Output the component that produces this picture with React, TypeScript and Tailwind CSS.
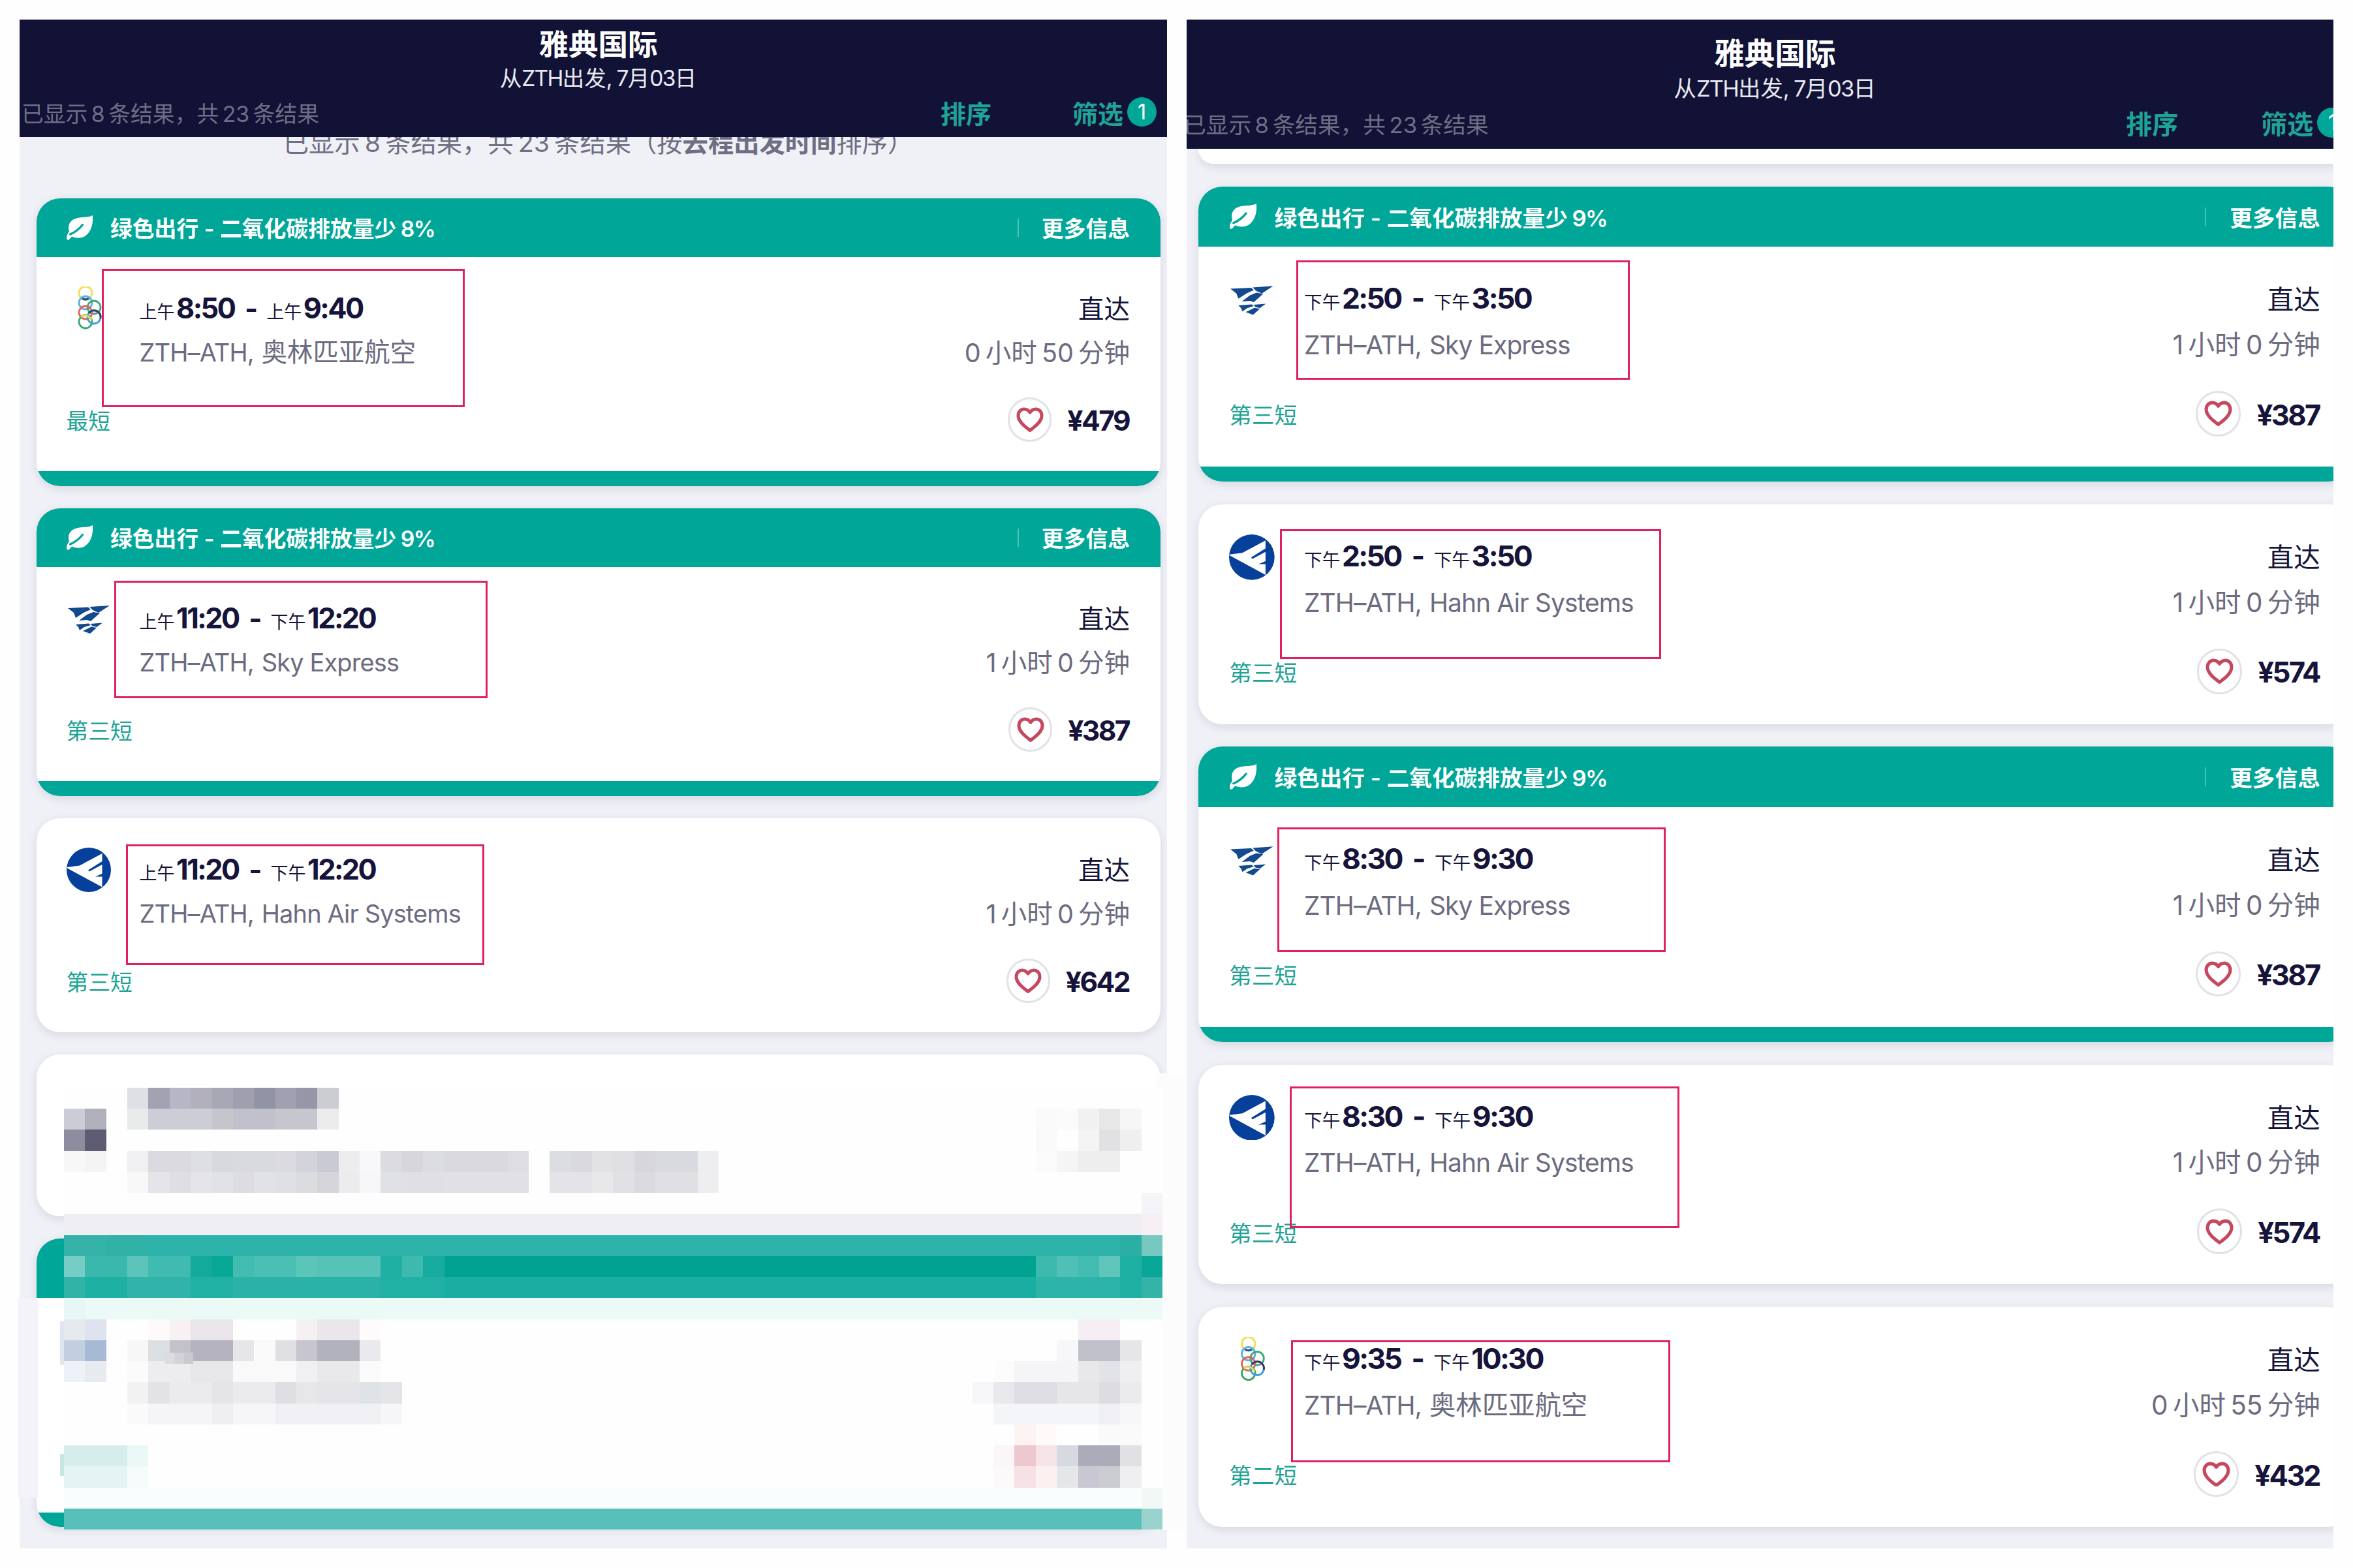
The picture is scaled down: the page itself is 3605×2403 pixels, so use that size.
import React from "react";

type Logo = "olympic" | "sky" | "hahn";

interface Flight {
  green?: string;
  logo: Logo;
  from: [string, string];
  to: [string, string];
  carrier: string;
  duration: string;
  tag: string;
  price: string;
}

interface Box {
  x: number;
  y: number;
  w: number;
  h: number;
}

const leftFlights: Flight[] = [
  { green: "8%", logo: "olympic", from: ["上午", "8:50"], to: ["上午", "9:40"], carrier: "奥林匹亚航空", duration: "0 小时 50 分钟", tag: "最短", price: "¥479" },
  { green: "9%", logo: "sky", from: ["上午", "11:20"], to: ["下午", "12:20"], carrier: "Sky Express", duration: "1 小时 0 分钟", tag: "第三短", price: "¥387" },
  { logo: "hahn", from: ["上午", "11:20"], to: ["下午", "12:20"], carrier: "Hahn Air Systems", duration: "1 小时 0 分钟", tag: "第三短", price: "¥642" },
];

const rightFlights: Flight[] = [
  { green: "9%", logo: "sky", from: ["下午", "2:50"], to: ["下午", "3:50"], carrier: "Sky Express", duration: "1 小时 0 分钟", tag: "第三短", price: "¥387" },
  { logo: "hahn", from: ["下午", "2:50"], to: ["下午", "3:50"], carrier: "Hahn Air Systems", duration: "1 小时 0 分钟", tag: "第三短", price: "¥574" },
  { green: "9%", logo: "sky", from: ["下午", "8:30"], to: ["下午", "9:30"], carrier: "Sky Express", duration: "1 小时 0 分钟", tag: "第三短", price: "¥387" },
  { logo: "hahn", from: ["下午", "8:30"], to: ["下午", "9:30"], carrier: "Hahn Air Systems", duration: "1 小时 0 分钟", tag: "第三短", price: "¥574" },
  { logo: "olympic", from: ["下午", "9:35"], to: ["下午", "10:30"], carrier: "奥林匹亚航空", duration: "0 小时 55 分钟", tag: "第二短", price: "¥432" },
];

const boxes: Box[] = [
  { x: 156, y: 412, w: 556, h: 212 },
  { x: 175, y: 890, w: 572, h: 180 },
  { x: 193, y: 1294, w: 549, h: 185 },
  { x: 1986, y: 399, w: 511, h: 183 },
  { x: 1961, y: 811, w: 584, h: 199 },
  { x: 1957, y: 1268, w: 595, h: 191 },
  { x: 1976, y: 1665, w: 597, h: 217 },
  { x: 1978, y: 2054, w: 581, h: 187 },
];

// Mosaic rows: [first column, column span, colour]
type Run = [number, number, string];
const mosaic: Run[][] = [
  [[3, 1, "#dfdfe6"], [4, 1, "#a2a2b2"], [5, 1, "#b6b6c5"], [6, 1, "#b2b0bd"], [7, 1, "#a7a7b5"], [8, 1, "#9f9fae"], [9, 1, "#9194a4"], [10, 1, "#a0a0b0"], [11, 1, "#9796a8"], [12, 1, "#ccccd3"]],
  [[0, 1, "#ccccd6"], [1, 1, "#b0b0bd"], [3, 1, "#e9eaeb"], [4, 3, "#cccdd7"], [7, 1, "#c5c6cc"], [8, 2, "#c1c1cd"], [10, 2, "#c6c6ce"], [12, 1, "#ececee"], [46, 1, "#fafafa"], [47, 1, "#fbfbfb"], [48, 1, "#f1f1f1"], [49, 1, "#e7e7e8"], [50, 1, "#f6f6f6"]],
  [[0, 1, "#8e8c9f"], [1, 1, "#5e5c73"], [46, 1, "#f9f9f9"], [48, 1, "#f4f4f4"], [49, 1, "#e1e1e3"], [50, 1, "#efeff0"]],
  [[0, 1, "#f7f7f8"], [1, 1, "#f4f4f5"], [3, 1, "#f0f0f2"], [4, 2, "#dadae0"], [6, 1, "#dedfe3"], [7, 1, "#d8d8df"], [8, 2, "#d9dadf"], [10, 1, "#dadae0"], [11, 1, "#d3d3dc"], [12, 1, "#cacad4"], [13, 1, "#ededf0"], [14, 1, "#f8f8fb"], [15, 1, "#dbdbe1"], [16, 1, "#d6d6dc"], [17, 1, "#dcdde1"], [18, 3, "#d9d9de"], [21, 1, "#dedee2"], [23, 1, "#dcdde1"], [24, 1, "#dadade"], [25, 1, "#e2e2e5"], [26, 1, "#dfdfe4"], [27, 1, "#d6d6dc"], [28, 2, "#d9d9e0"], [30, 1, "#eeeef0"], [46, 1, "#fbfbfb"], [47, 1, "#f5f5f5"], [48, 2, "#eeeeee"]],
  [[3, 1, "#f8f8f9"], [4, 1, "#e5e5e9"], [5, 1, "#dfdfe3"], [6, 1, "#e4e4e9"], [7, 1, "#e1e2e6"], [8, 1, "#dcdce1"], [9, 1, "#e0e2e5"], [10, 1, "#dfe0e5"], [11, 1, "#dbdcde"], [12, 1, "#d4d4da"], [13, 1, "#ececef"], [14, 1, "#f7f7fa"], [15, 1, "#e0e1e5"], [16, 2, "#dfdfe4"], [18, 4, "#e0e0e5"], [23, 2, "#e3e3e8"], [25, 1, "#e8e8eb"], [26, 1, "#e0e0e5"], [27, 1, "#dadadf"], [28, 2, "#dfdfe4"], [30, 1, "#eeeef1"]],
  [[51, 1, "#f4f5f9"]],
  [[0, 51, "#efeef3"], [51, 1, "#f6f0f5"]],
  [[0, 2, "#36b3a9"], [2, 2, "#30b2a8"], [4, 46, "#2eb3aa"], [50, 1, "#2bafa5"], [51, 1, "#76c8c0"]],
  [[0, 1, "#76cdc6"], [1, 2, "#3bb8ad"], [3, 1, "#5cc4ba"], [4, 2, "#3fbbb1"], [6, 1, "#12ab9b"], [7, 1, "#07a896"], [8, 1, "#42bcb1"], [9, 2, "#4cbfb4"], [11, 1, "#5cc5ba"], [12, 3, "#57c2b8"], [15, 1, "#20b0a3"], [16, 1, "#3eb9ae"], [17, 1, "#18ac9f"], [18, 28, "#00a392"], [46, 1, "#3eb9ae"], [47, 1, "#50bfb5"], [48, 1, "#42bbb1"], [49, 1, "#60c5bb"], [50, 1, "#1fb0a4"], [51, 1, "#08a797"]],
  [[0, 1, "#32b3a8"], [1, 2, "#1fb0a4"], [3, 3, "#32b3a9"], [6, 2, "#20b1a4"], [8, 7, "#2bb2a7"], [15, 3, "#20b0a4"], [18, 28, "#1aaea2"], [46, 4, "#2cb4a9"], [50, 1, "#20b0a3"], [51, 1, "#34b3a9"]],
  [[0, 1, "#e6f7f5"], [1, 51, "#ebf9f7"]],
  [[0, 1, "#e5eaef"], [1, 1, "#dfe2ef"], [4, 1, "#fefafb"], [5, 1, "#f7f1f3"], [6, 2, "#e9e5e9"], [11, 1, "#f5f1f3"], [12, 2, "#ebe6ea"], [14, 1, "#fffbfc"], [48, 2, "#f5eef3"]],
  [[0, 1, "#c2cfe0"], [1, 1, "#a7bad5"], [3, 1, "#f7f7f8"], [4, 1, "#dcdfe2"], [5, 1, "#c3c2c9"], [6, 2, "#b4b3bf"], [8, 1, "#e6e6e9"], [9, 1, "#fafafb"], [10, 1, "#e0e0e3"], [11, 1, "#c7c6d0"], [12, 2, "#b2b1be"], [14, 1, "#eae9ed"], [47, 1, "#f7f7f9"], [48, 2, "#c1c1cb"], [50, 1, "#e6e6e9"]],
  [[0, 1, "#eef1f8"], [1, 1, "#e7ebf0"], [3, 1, "#fbfbfb"], [4, 2, "#ededef"], [6, 2, "#e7e7ea"], [8, 3, "#f9f9fa"], [11, 1, "#f0f0f2"], [12, 2, "#e9e9ec"], [14, 1, "#fbfbfc"], [44, 1, "#fcfcfd"], [45, 3, "#f5f5f7"], [48, 1, "#e8e8eb"], [49, 1, "#e2e3e7"], [50, 1, "#efeff1"]],
  [[3, 1, "#f2f2f3"], [4, 1, "#e3e3e7"], [5, 2, "#ebebed"], [7, 1, "#e4e4e9"], [8, 2, "#ebebed"], [10, 1, "#dedfe3"], [11, 1, "#e7e7ea"], [12, 2, "#e5e5e9"], [14, 1, "#dfe2e7"], [15, 1, "#e4e4e9"], [43, 1, "#f7f7fa"], [44, 1, "#e9e8ed"], [45, 2, "#dddde3"], [47, 2, "#e6e6e9"], [49, 1, "#dcdce1"], [50, 1, "#ebebed"]],
  [[3, 1, "#fafafb"], [4, 3, "#f5f5f8"], [7, 1, "#efeff3"], [8, 2, "#f6f6f8"], [10, 5, "#f0f0f4"], [15, 1, "#f6f6f8"], [44, 5, "#f4f5f8"], [49, 1, "#f0f0f4"], [50, 1, "#f7f7f9"]],
  [[45, 1, "#fdf3f2"], [46, 1, "#fefafa"], [49, 2, "#fafafb"]],
  [[0, 3, "#d5eeeb"], [3, 1, "#eaf8f7"], [44, 1, "#fbf6f8"], [45, 1, "#eec8cf"], [46, 1, "#f7e4e8"], [47, 1, "#d6d9e2"], [48, 2, "#acabb9"], [50, 1, "#e0e0e5"]],
  [[0, 3, "#e4f4f2"], [3, 1, "#f4fbfa"], [44, 1, "#fdf9fa"], [45, 1, "#f5e1e6"], [46, 1, "#fdf0f1"], [47, 1, "#e4e6ea"], [48, 1, "#c8c7d2"], [49, 1, "#cbcbd2"], [50, 1, "#efeff1"]],
  [[0, 51, "#f8fdfd"], [51, 1, "#f1f8f6"]],
  [[0, 51, "#57bfb8"], [51, 1, "#9ad3cd"]],
];

function Leaf() {
  return (
    <svg viewBox="0 0 40 38" className="h-[calc(38*var(--u))] w-[calc(40*var(--u))]">
      <path
        d="M40 0C33 4 24 2 15 4.500C6 7 1 14 4 25C1.500 28 0 31 0 35.500C0.500 38 3 38.500 4.500 36.500C6 34.500 7 33.500 8.500 32.500C13 35 22 36 28 32C37 26 41 15 40 0Z"
        fill="#fff"
      />
      <path d="M5.500 29C13 26 19 21.500 24.500 14.500" stroke="#00a698" strokeWidth="3.200" fill="none" strokeLinecap="round" />
    </svg>
  );
}

function Heart() {
  return (
    <svg viewBox="0 0 42 38" className="h-[calc(38*var(--u))] w-[calc(42*var(--u))]">
      <path
        d="M21 35.500C15 31 3 23 3 13C3 7 7 3 12 3C16 3 19 5 21 8C23 5 26 3 30 3C35 3 39 7 39 13C39 23 27 31 21 35.500Z"
        fill="none"
        stroke="#c5485f"
        strokeWidth="5"
        strokeLinejoin="round"
      />
    </svg>
  );
}

function AirlineLogo({ kind }: { kind: Logo }) {
  const cls = "h-[calc(68*var(--u))] w-[calc(68*var(--u))] shrink-0";
  if (kind === "hahn") {
    return (
      <svg viewBox="0 0 68 68" className={cls}>
        <circle cx="34" cy="34" r="34" fill="#07409a" />
        <path d="M1 30L20 27.500L54.500 9V21L33 34.500L35 36.500L54.500 26V40L44 44.500L54.500 44.500V60.500L1 31.500Z" fill="#fff" />
      </svg>
    );
  }
  if (kind === "sky") {
    return (
      <svg viewBox="0 0 68 68" className={cls}>
        <g fill="#12498f">
          <path d="M2 18L33 16.500L37 20L26 25L14 33L11 25Z" />
          <path d="M35.500 16L66 14L49 25L40 21Z" />
          <path d="M19 37L31 28L41 24L51 25.500L37 38L31 36Z" />
          <path d="M14 43L34 41.500L37 44L27 47L20 52L18 47Z" />
          <path d="M37 42L55 40.500L46 47L39 45Z" />
          <path d="M25 53L38 46.500L46 48L36 57Z" />
        </g>
      </svg>
    );
  }
  return (
    <svg viewBox="0 0 68 68" className={cls} fill="none" strokeWidth="2.800">
      <circle cx="29" cy="10" r="10" stroke="#f6dc55" />
      <circle cx="29" cy="25" r="10" stroke="#58b4dc" />
      <circle cx="42" cy="32" r="10" stroke="#3fa877" />
      <circle cx="29" cy="40" r="10" stroke="#e4625f" />
      <path d="M24 18.500A10 10 0 0 0 34 18.500" stroke="#245a92" strokeWidth="3.500" />
      <circle cx="29" cy="54" r="10" stroke="#3aa76d" />
      <circle cx="42" cy="47" r="10" stroke="#3f9fd0" />
      <path d="M34 41A10 10 0 0 1 52 49" stroke="#3d3563" strokeWidth="2.800" />
      <path d="M22 47A10 10 0 0 1 38 52" stroke="#e6dc4e" />
    </svg>
  );
}

function GreenBar({ amount }: { amount: string }) {
  return (
    <div className="flex h-[calc(90*var(--u))] items-center bg-[#00a698] pr-[calc(47*var(--u))] pl-[calc(46.5*var(--u))] text-[length:calc(33.8*var(--u))] leading-none font-semibold text-white">
      <Leaf />
      <span className="ml-[calc(27*var(--u))] pt-[calc(4*var(--u))]">
        绿色出行 - 二氧化碳排放量少 <span className="-ml-[calc(2*var(--u))] tracking-[-0.05em]">{amount}</span>
      </span>
      <span className="ml-auto h-[calc(28*var(--u))] w-[2px] bg-white/30" />
      <span className="ml-[calc(35*var(--u))] pt-[calc(4*var(--u))]">更多信息</span>
    </div>
  );
}

function Time({ value }: { value: [string, string] }) {
  return (
    <>
      <span className="mr-[calc(2.500*var(--u))] text-[length:calc(27*var(--u))] font-normal tracking-normal">{value[0]}</span>
      <span>{value[1]}</span>
    </>
  );
}

function Carrier({ name }: { name: string }) {
  const isLatin = /^[A-Za-z]/.test(name);
  return isLatin ? (
    <span className="ml-[calc(2*var(--u))]">{name}</span>
  ) : (
    <span className="ml-[calc(2*var(--u))] text-[length:calc(39.4*var(--u))] tracking-normal">{name}</span>
  );
}

function Card({ flight }: { flight: Flight }) {
  return (
    <div className="overflow-hidden rounded-[calc(36*var(--u))] bg-white shadow-[0_4px_14px_rgba(37,32,61,0.12)]">
      {flight.green && <GreenBar amount={flight.green} />}
      <div className="h-[calc(328.500*var(--u))] pt-[calc(45*var(--u))] pr-[calc(47*var(--u))] pl-[calc(46*var(--u))]">
        <div className="flex">
          <AirlineLogo kind={flight.logo} />
          <div className="ml-[calc(44*var(--u))]">
            <div className="h-[calc(66*var(--u))] text-[length:calc(43.300*var(--u))] leading-[calc(66*var(--u))] font-bold tracking-[-0.058em] whitespace-nowrap text-[#16143a]">
              <Time value={flight.from} />
              <span className="mr-[calc(13*var(--u))] ml-[calc(15.500*var(--u))] tracking-normal">-</span>
              <Time value={flight.to} />
            </div>
            <div className="h-[calc(72*var(--u))] text-[length:calc(38*var(--u))] leading-[calc(71.500*var(--u))] tracking-[-0.023em] whitespace-nowrap text-[#6c6b80]">
              ZTH–ATH, <Carrier name={flight.carrier} />
            </div>
          </div>
          <div className="ml-auto text-right text-[length:calc(39.500*var(--u))]">
            <div className="h-[calc(66*var(--u))] leading-[calc(71*var(--u))] text-[#16143a]">直达</div>
            <div className="h-[calc(72*var(--u))] leading-[calc(72*var(--u))] text-[#6c6b80] [word-spacing:-0.1em]">{flight.duration}</div>
          </div>
        </div>
        <div className="flex h-[calc(138*var(--u))] items-center leading-none">
          <span className="text-[length:calc(33.8*var(--u))] text-[#1fa395]">{flight.tag}</span>
          <span className="mr-[calc(24*var(--u))] mb-[calc(5*var(--u))] ml-auto flex h-[calc(68*var(--u))] w-[calc(67*var(--u))] items-center justify-center rounded-full border-3 border-[#e2e2e6]">
            <Heart />
          </span>
          <span className="mr-[calc(1*var(--u))] text-[length:calc(42.500*var(--u))] font-bold tracking-[-0.06em] text-[#16143a]">{flight.price}</span>
        </div>
      </div>
      {flight.green && <div className="h-[calc(22.500*var(--u))] bg-[#00a698]" />}
    </div>
  );
}

function Header({ className }: { className: string }) {
  return (
    <div className={"relative bg-[#111235] text-center leading-none text-white " + className}>
      <div className="h-[calc(77*var(--u))] pl-[calc(15*var(--u))] text-[length:calc(45.500*var(--u))] leading-[calc(77*var(--u))] font-bold">雅典国际</div>
      <div className="h-[calc(26*var(--u))] pl-[calc(15*var(--u))] text-[length:calc(33.500*var(--u))] leading-[calc(27*var(--u))] text-[#e9e9f2]">
        从<span className="tracking-[-0.05em]">ZTH</span>出发<span className="tracking-[-0.05em]">, 7</span>月<span className="tracking-[-0.05em]">03</span>日
      </div>
      <div className="flex h-[calc(77*var(--u))] items-center pt-[calc(6*var(--u))] pr-[calc(16*var(--u))] pl-[calc(3*var(--u))]">
        <span className="text-[length:calc(33.8*var(--u))] whitespace-nowrap text-[#6f6e86] [word-spacing:-0.12em]">已显示 8 条结果，共 23 条结果</span>
        <span className="mr-[calc(124*var(--u))] ml-auto text-[length:calc(39*var(--u))] font-semibold text-[#1ea396]">排序</span>
        <span className="mr-[calc(6*var(--u))] text-[length:calc(39*var(--u))] font-semibold text-[#1ea396]">筛选</span>
        <span className="mb-[calc(6*var(--u))] flex h-[calc(45*var(--u))] w-[calc(45*var(--u))] items-center justify-center rounded-full bg-[#00a698] text-[length:calc(33*var(--u))]">1</span>
      </div>
    </div>
  );
}

function Mosaic() {
  return (
    <div className="absolute top-[1667px] left-[98px] grid h-[677px] w-[1683px] grid-rows-[repeat(21,minmax(0,1fr))] bg-[#fefefe]">
      {mosaic.map((row, r) => (
        <div key={r} className="grid grid-cols-[repeat(52,minmax(0,1fr))]">
          {row.map(([start, span, color]) => (
            <span key={start} className="row-start-1" style={{ gridColumn: `${start + 1} / span ${span}`, backgroundColor: color }} />
          ))}
        </div>
      ))}
    </div>
  );
}

export default function App() {
  return (
    <div className="relative flex h-[2403px] w-[3605px] gap-[30px] overflow-hidden bg-[#fefefe] p-[30px] font-['Inter','Noto_Sans_CJK_SC',sans-serif]">
      <div className="h-[2343px] w-[1758px] overflow-hidden bg-[#f0f1f7] [--u:1px]">
        <Header className="h-[180px]" />
        <div className="h-[93.500px] pl-[15px] text-center text-[length:39.300px] leading-[17px] text-[#6f6e83] [word-spacing:-0.1em]">
          已显示 8 条结果，共 23 条结果（按<b>去程出发时间</b>排序）
        </div>
        <div className="mr-[10px] ml-[25.500px] flex flex-col gap-[34px]">
          {leftFlights.map((f, i) => (
            <Card key={i} flight={f} />
          ))}
          <div className="h-[248px] rounded-[36px] bg-white shadow-[0_4px_14px_rgba(37,32,61,0.12)]" />
          <div className="flex h-[442px] flex-col justify-between overflow-hidden rounded-[36px] bg-white shadow-[0_4px_14px_rgba(37,32,61,0.12)]">
            <div className="h-[91px] bg-[#00a698]" />
            <div className="h-[22px] bg-[#00a698]" />
          </div>
        </div>
      </div>

      <div className="h-[2343px] w-[1757px] overflow-hidden bg-[#f0f1f7] [--u:1.0255px]">
        <div className="-ml-[8px] w-[1803px]">
          <Header className="h-[198px] pt-[13px]" />
          <div className="mr-[10px] ml-[26px] flex flex-col gap-[34.800px]">
            <div className="h-[23px] rounded-b-[36px] bg-white shadow-[0_4px_14px_rgba(37,32,61,0.12)]" />
            {rightFlights.map((f, i) => (
              <Card key={i} flight={f} />
            ))}
          </div>
        </div>
      </div>

      <div className="absolute top-[1645px] left-[1770px] h-[700px] w-[42px] bg-[#fcfcfd]" />
      <div className="absolute top-[1990px] left-[27px] h-[306px] w-[32px] bg-[#f3f3f9]" />
      <div className="absolute top-[2025px] left-[92px] h-[67px] w-[6px] bg-[#dfe6ef]" />
      <div className="absolute top-[2228px] left-[92px] h-[34px] w-[6px] bg-[#c6e6e1]" />
      <Mosaic />
      <div className="absolute top-[2073px] left-[253px] flex h-[17px] w-[43px]">
        <span className="flex-1 bg-[#dcdce0]" />
        <span className="flex-1 bg-[#d2d2d8]" />
        <span className="flex-1 bg-[#c9c9d0]" />
      </div>

      {boxes.map((b, i) => (
        <div key={i} className="absolute border-3 border-[#e0205f]" style={{ left: b.x, top: b.y, width: b.w, height: b.h }} />
      ))}
    </div>
  );
}
